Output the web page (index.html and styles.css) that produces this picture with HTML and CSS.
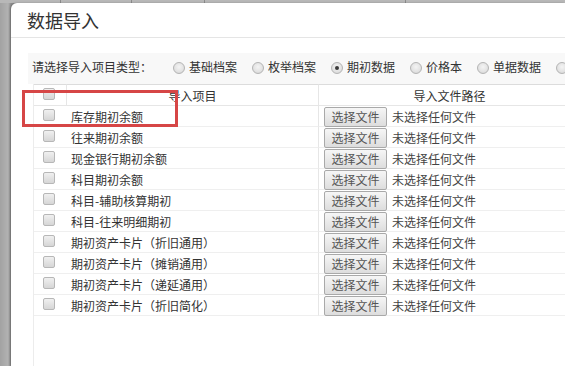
FILE: index.html
```html
<!DOCTYPE html>
<html lang="zh-CN">
<head>
<meta charset="utf-8">
<title>数据导入</title>
<link rel="stylesheet" href="styles.css">
</head>
<body>
<div class="desktop">
  <div class="page-strip">
    <span class="tab t1"></span><span class="tab t2"></span><span class="tab t3"></span><span class="tab t4"></span>
  </div>
  <div class="dialog">
    <div class="dialog-header">数据导入</div>
    <div class="dialog-body">
      <div class="type-row">
        <span class="type-label">请选择导入项目类型：</span>
        <span class="radio"></span><span class="radio-text">基础档案</span>
        <span class="radio"></span><span class="radio-text">枚举档案</span>
        <span class="radio checked"></span><span class="radio-text">期初数据</span>
        <span class="radio"></span><span class="radio-text">价格本</span>
        <span class="radio"></span><span class="radio-text">单据数据</span>
        <span class="radio"></span>
      </div>
      <div class="grid-wrap">
        <div class="grid">
          <div class="hcell hcheck"><span class="checkbox"></span></div>
          <div class="hcell hitem">导入项目</div>
          <div class="hcell hpath">导入文件路径</div>

          <div class="cell ccheck"><span class="checkbox"></span></div>
          <div class="cell citem">库存期初余额</div>
          <div class="cell cpath"><button class="file-btn">选择文件</button><span class="no-file">未选择任何文件</span></div>

          <div class="cell ccheck"><span class="checkbox"></span></div>
          <div class="cell citem">往来期初余额</div>
          <div class="cell cpath"><button class="file-btn">选择文件</button><span class="no-file">未选择任何文件</span></div>

          <div class="cell ccheck"><span class="checkbox"></span></div>
          <div class="cell citem">现金银行期初余额</div>
          <div class="cell cpath"><button class="file-btn">选择文件</button><span class="no-file">未选择任何文件</span></div>

          <div class="cell ccheck"><span class="checkbox"></span></div>
          <div class="cell citem">科目期初余额</div>
          <div class="cell cpath"><button class="file-btn">选择文件</button><span class="no-file">未选择任何文件</span></div>

          <div class="cell ccheck"><span class="checkbox"></span></div>
          <div class="cell citem">科目-辅助核算期初</div>
          <div class="cell cpath"><button class="file-btn">选择文件</button><span class="no-file">未选择任何文件</span></div>

          <div class="cell ccheck"><span class="checkbox"></span></div>
          <div class="cell citem">科目-往来明细期初</div>
          <div class="cell cpath"><button class="file-btn">选择文件</button><span class="no-file">未选择任何文件</span></div>

          <div class="cell ccheck"><span class="checkbox"></span></div>
          <div class="cell citem">期初资产卡片（折旧通用）</div>
          <div class="cell cpath"><button class="file-btn">选择文件</button><span class="no-file">未选择任何文件</span></div>

          <div class="cell ccheck"><span class="checkbox"></span></div>
          <div class="cell citem">期初资产卡片（摊销通用）</div>
          <div class="cell cpath"><button class="file-btn">选择文件</button><span class="no-file">未选择任何文件</span></div>

          <div class="cell ccheck"><span class="checkbox"></span></div>
          <div class="cell citem">期初资产卡片（递延通用）</div>
          <div class="cell cpath"><button class="file-btn">选择文件</button><span class="no-file">未选择任何文件</span></div>

          <div class="cell ccheck"><span class="checkbox"></span></div>
          <div class="cell citem">期初资产卡片（折旧简化）</div>
          <div class="cell cpath"><button class="file-btn">选择文件</button><span class="no-file">未选择任何文件</span></div>
        </div>
      </div>
    </div>
  </div>
  <div class="highlight"></div>
</div>
</body>
</html>
```

FILE: styles.css
```css
html, body {
  margin: 0;
  padding: 0;
  width: 565px;
  height: 366px;
  overflow: hidden;
}
body {
  font-family: "Noto Sans CJK SC", "Liberation Sans", sans-serif;
  font-size: 12px;
  color: #333;
  background: #a9a9a9;
}
.desktop {
  position: relative;
  width: 565px;
  height: 366px;
  display: flex;
  flex-direction: column;
  background: linear-gradient(to right, #a2a2a2 0, #b2b2b2 8px, #8e8e8e 11px);
}
.page-strip {
  height: 3px;
  flex: none;
  display: flex;
  background: #b8b8b8;
}
.tab {
  height: 3px;
  border-right: 1px solid #8c8c8c;
}
.t1 { width: 60px; }
.t2 { width: 70px; }
.t3 { width: 72px; }
.t4 { width: 200px; }
.dialog {
  flex: 1;
  margin-left: 11px;
  background: #fff;
  border-top-left-radius: 6px;
  display: flex;
  flex-direction: column;
  box-shadow: -1px 0 2px rgba(0,0,0,0.25);
}
.dialog-header {
  height: 34px;
  line-height: 34px;
  padding-left: 16px;
  font-size: 18px;
  color: #333;
  border-bottom: 1px solid #e5e5e5;
  flex: none;
}
.dialog-body {
  flex: 1;
  padding: 15px 0 0 17px;
  display: flex;
  flex-direction: column;
}
.type-row {
  height: 31px;
  box-sizing: border-box;
  padding: 0 0 3px 4px;
  display: flex;
  align-items: center;
  background: #f8f8f8;
  white-space: nowrap;
  flex: none;
}
.type-label {
  margin-right: 21px;
  line-height: 16px;
}
.radio {
  width: 12px;
  height: 12px;
  border-radius: 50%;
  border: 1px solid #b4b4b4;
  background: radial-gradient(circle at 50% 40%, #f4f4f4 0, #e2e2e2 60%, #cfcfcf 100%);
  box-sizing: border-box;
  flex: none;
  position: relative;
  margin-right: 4px;
  margin-top: 1px;
}
.radio.checked::after {
  content: "";
  position: absolute;
  left: 3px;
  top: 3px;
  width: 4px;
  height: 4px;
  border-radius: 50%;
  background: #3a3a3a;
}
.radio-text {
  margin-right: 15px;
  line-height: 16px;
}
.grid-wrap {
  flex: 1;
  margin-left: 5px;
  border-left: 1px solid #ececec;
}
.grid {
  display: grid;
  grid-template-columns: 32px 252px 262px;
  grid-auto-rows: 21px;
  grid-template-rows: 22px;
}
.hcell {
  height: 22px;
  border-top: 1px solid #dcdcdc;
  border-bottom: 1px solid #e6e6e6;
  box-sizing: border-box;
  line-height: 22px;
  text-align: center;
  color: #333;
}
.hitem, .hpath {
  border-left: 1px solid #e6e6e6;
}
.hcheck {
  text-align: left;
}
.hcheck .checkbox {
  margin-top: 3px;
  margin-left: 9px;
}
.cell {
  height: 21px;
  box-sizing: border-box;
  border-bottom: 1px solid #efefef;
  line-height: 22px;
  white-space: nowrap;
}
.ccheck {
  padding-left: 9px;
}
.checkbox {
  display: block;
  width: 12px;
  height: 12px;
  box-sizing: border-box;
  border: 1px solid #b7b7b7;
  border-radius: 2px;
  background: linear-gradient(#f0f0f0, #d6d6d6);
}
.ccheck .checkbox {
  margin-top: 3px;
}
.citem {
  padding-left: 5px;
  color: #333;
}
.cpath {
  border-left: 1px solid #e6e6e6;
  padding-left: 5px;
  display: flex;
  align-items: center;
}
.file-btn {
  font-family: inherit;
  font-size: 12px;
  color: #555;
  height: 20px;
  width: 63px;
  padding: 0;
  line-height: 18px;
  border: 1px solid #a9a9a9;
  border-radius: 2px;
  background: linear-gradient(#f6f6f6, #dddddd);
  margin-right: 5px;
  margin-top: 1px;
}
.no-file {
  color: #444;
  line-height: 16px;
  margin-top: 1px;
}
.highlight {
  position: absolute;
  left: 22px;
  top: 90px;
  width: 156px;
  height: 37px;
  border: 3px solid #d64646;
  box-sizing: border-box;
}
```
